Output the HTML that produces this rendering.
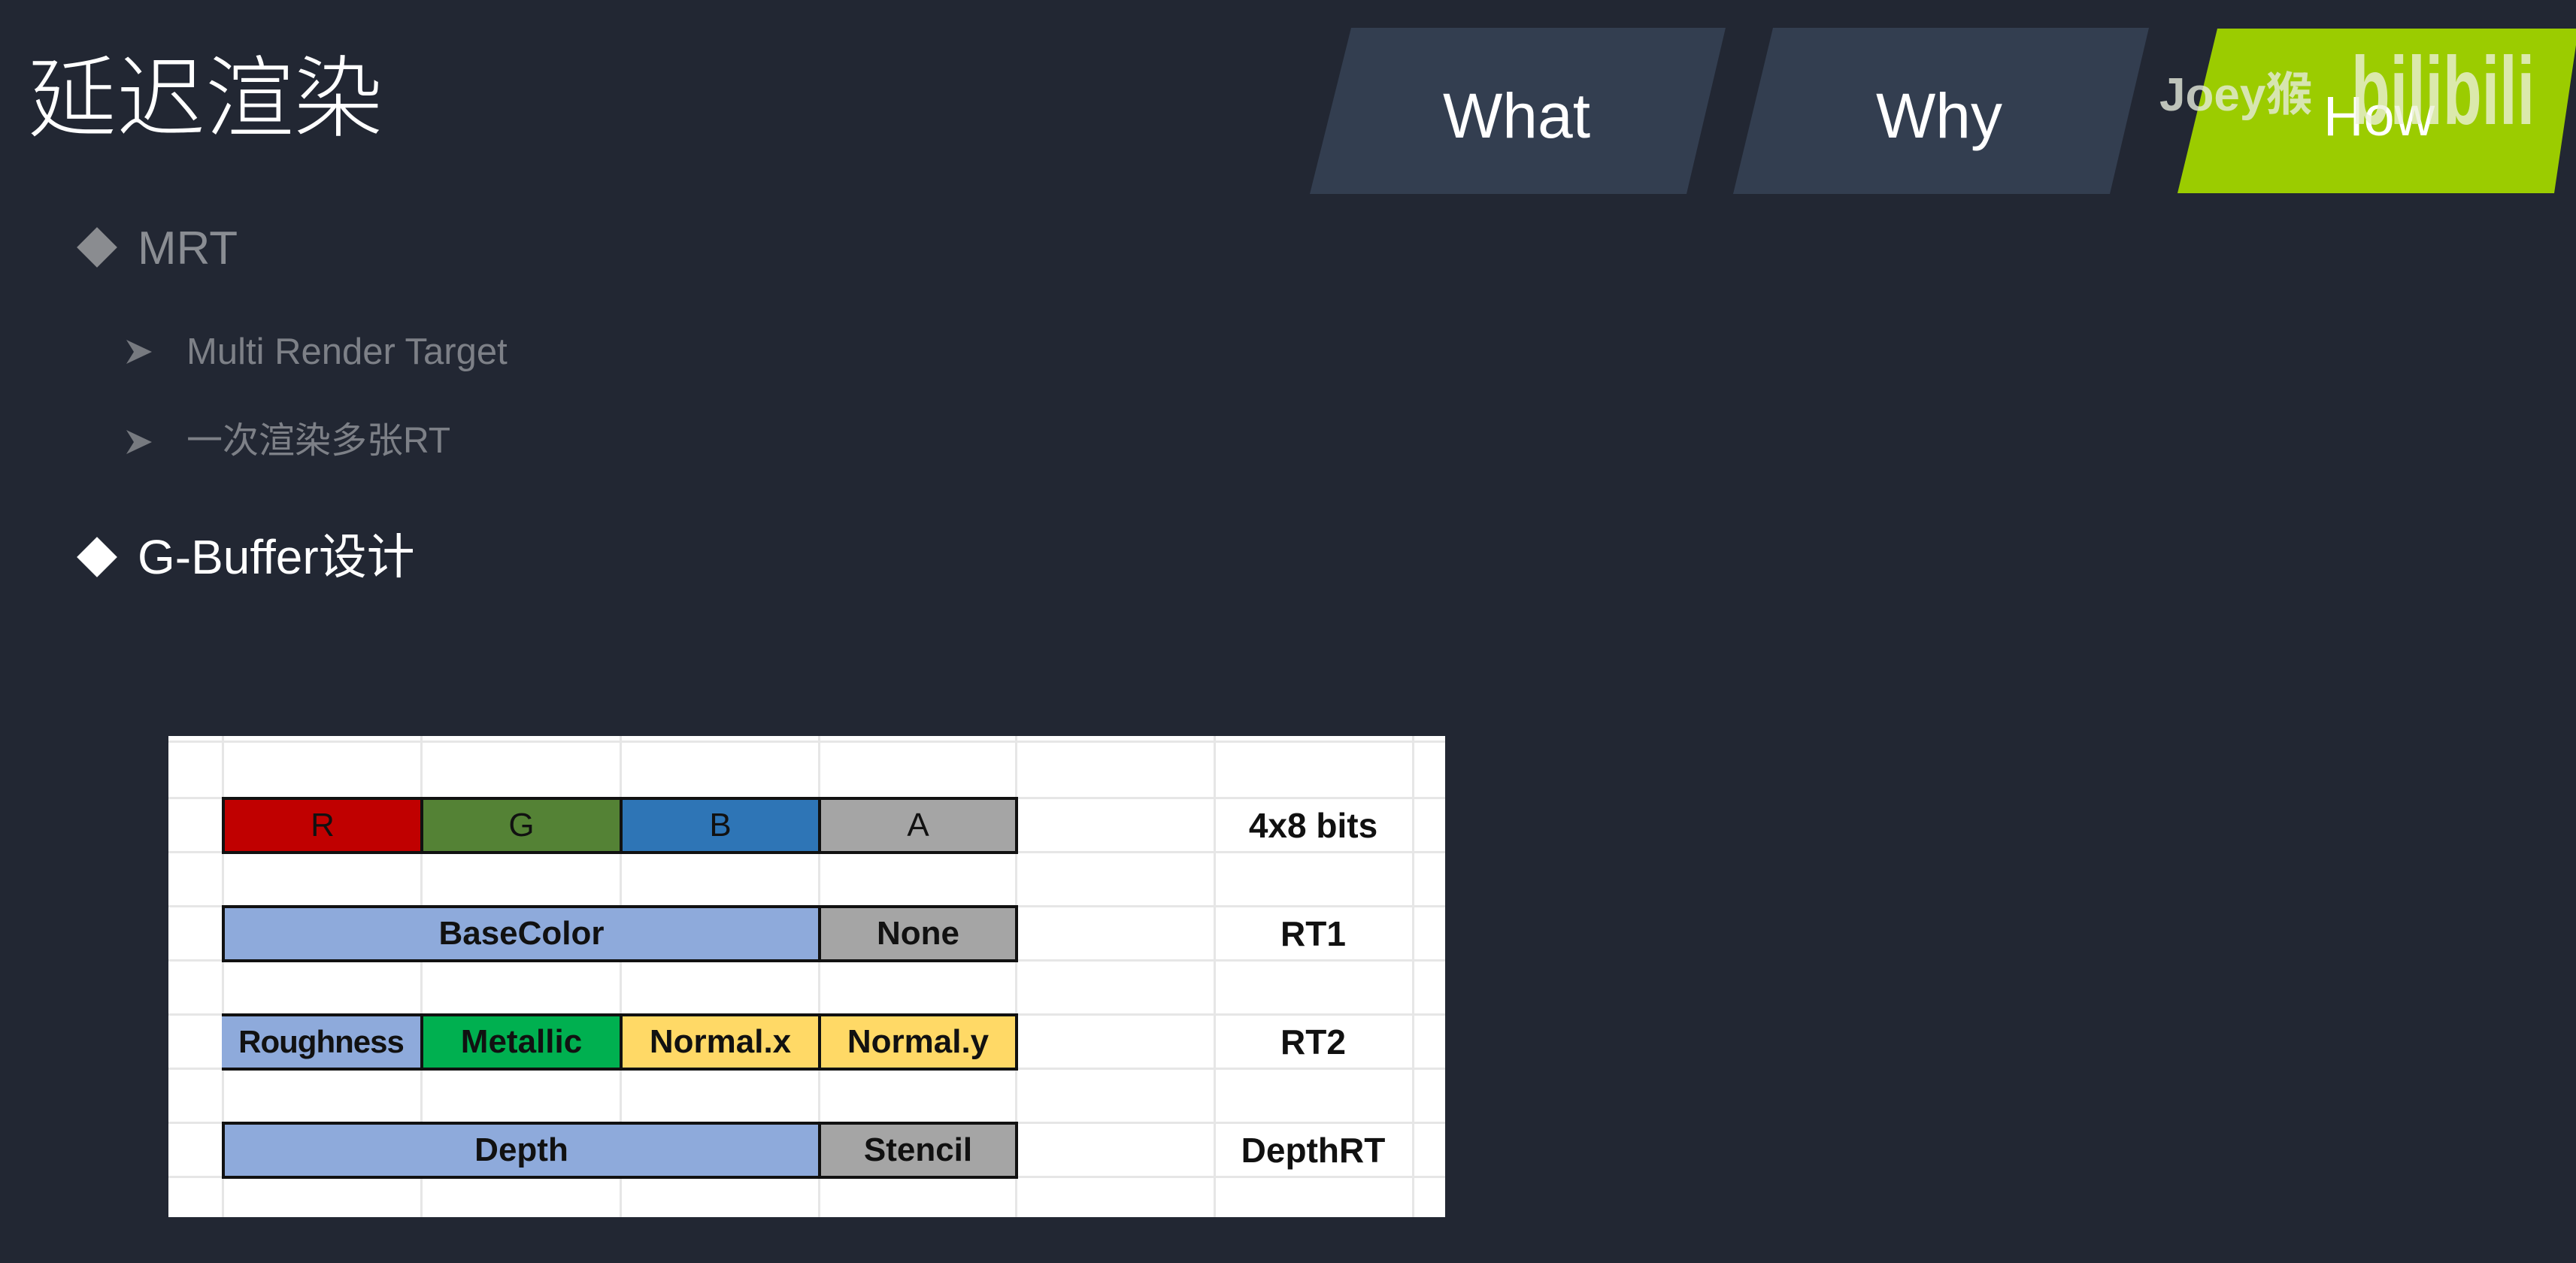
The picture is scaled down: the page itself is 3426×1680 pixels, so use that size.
<!DOCTYPE html>
<html><head><meta charset="utf-8"><style>
*{margin:0;padding:0;box-sizing:border-box}
html,body{width:3426px;height:1680px;overflow:hidden;background:#222733}
body{position:relative;font-family:"Liberation Sans","Noto Sans CJK SC",sans-serif}
.a{position:absolute;white-space:nowrap}
.dia{position:absolute;width:38px;height:38px;transform:rotate(45deg)}
.tbl{position:absolute;left:224px;top:979px;width:1698px;height:640px;background:#fff;overflow:hidden}
.vl{position:absolute;top:0;bottom:0;width:3px;background:#e6e6e6}
.hl{position:absolute;left:0;right:0;height:3px;background:#e6e6e6}
.c{position:absolute;display:flex;align-items:center;justify-content:center;font-weight:bold;font-size:44px;color:#111;border:4px solid #111;}
.lab{position:absolute;display:flex;align-items:center;justify-content:center;font-weight:bold;font-size:46px;color:#111;width:265px}
</style></head><body>
<div class="a" style="left:37px;top:50px;font-size:118px;color:#fff;font-family:'Noto Sans CJK SC',sans-serif;font-weight:300;line-height:1.2">延迟渲染</div>

<div class="dia" style="left:110px;top:310px;background:#8a8c90"></div>
<div class="a" style="left:183px;top:294px;font-size:62px;color:#8a8d93;line-height:1.2">MRT</div>
<svg class="a" style="left:168px;top:452px" width="34" height="32" viewBox="0 0 34 32"><path d="M0 0 L34 16 L0 32 L10 16 Z" fill="#777a80"/></svg>
<div class="a" style="left:248px;top:439px;font-size:49px;color:#7d8087;line-height:1.2">Multi Render Target</div>
<svg class="a" style="left:168px;top:572px" width="34" height="32" viewBox="0 0 34 32"><path d="M0 0 L34 16 L0 32 L10 16 Z" fill="#777a80"/></svg>
<div class="a" style="left:248px;top:558px;font-size:48px;color:#7d8087;line-height:1.2">一次渲染多张RT</div>
<div class="dia" style="left:110px;top:722px;background:#fff"></div>
<div class="a" style="left:183px;top:703px;font-size:64px;color:#fff;line-height:1.2">G-Buffer设计</div>

<svg class="a" style="left:0;top:0" width="3426" height="300">
<polygon points="1797,37 2295,37 2243,258 1742,258" fill="#333e50"/>
<polygon points="2358,37 2858,37 2806,258 2305,258" fill="#333e50"/>
<polygon points="2949,38 3426,38 3426,60 3397,257 2896,257" fill="#9bcc00"/>
</svg>
<div class="a" style="left:1919px;top:112px;font-size:84px;color:#fff;line-height:1">What</div>
<div class="a" style="left:2495px;top:112px;font-size:84px;color:#fff;line-height:1">Why</div>
<div class="a" style="left:3090px;top:118px;font-size:74px;color:#fff;line-height:1">How</div>
<div class="a" style="left:2872px;top:96px;font-size:62px;font-weight:bold;color:rgba(230,235,220,.8);line-height:1">Joey猴</div>
<div class="a" style="left:3127px;top:58px;font-size:128px;font-weight:bold;color:rgba(235,240,215,.8);line-height:1;transform:scaleX(.66);transform-origin:left">bilibili</div>

<div class="tbl">
<div class="hl" style="top:6px"></div>
<div class="hl" style="top:81px"></div><div class="hl" style="top:153px"></div>
<div class="hl" style="top:225px"></div><div class="hl" style="top:297px"></div>
<div class="hl" style="top:369px"></div><div class="hl" style="top:441px"></div>
<div class="hl" style="top:513px"></div><div class="hl" style="top:585px"></div>
<div class="vl" style="left:71px"></div><div class="vl" style="left:335px"></div>
<div class="vl" style="left:600px"></div><div class="vl" style="left:864px"></div>
<div class="vl" style="left:1126px"></div><div class="vl" style="left:1390px"></div>
<div class="vl" style="left:1654px"></div>

<div class="c" style="left:71px;top:81px;width:268px;height:76px;background:#c00000;font-weight:normal">R</div>
<div class="c" style="left:335px;top:81px;width:269px;height:76px;background:#548235;font-weight:normal">G</div>
<div class="c" style="left:600px;top:81px;width:268px;height:76px;background:#2e75b6;font-weight:normal">B</div>
<div class="c" style="left:864px;top:81px;width:266px;height:76px;background:#a5a5a5;font-weight:normal">A</div>
<div class="lab" style="left:1390px;top:81px;height:76px">4x8 bits</div>

<div class="c" style="left:71px;top:225px;width:797px;height:76px;background:#8eaadb">BaseColor</div>
<div class="c" style="left:864px;top:225px;width:266px;height:76px;background:#a5a5a5">None</div>
<div class="lab" style="left:1390px;top:225px;height:76px">RT1</div>

<div class="c" style="left:71px;top:369px;width:268px;height:76px;background:#8eaadb;font-size:42px;border-left:none;letter-spacing:-1px">Roughness</div>
<div class="c" style="left:335px;top:369px;width:269px;height:76px;background:#00b050">Metallic</div>
<div class="c" style="left:600px;top:369px;width:268px;height:76px;background:#ffd966">Normal.x</div>
<div class="c" style="left:864px;top:369px;width:266px;height:76px;background:#ffd966">Normal.y</div>
<div class="lab" style="left:1390px;top:369px;height:76px">RT2</div>

<div class="c" style="left:71px;top:513px;width:797px;height:76px;background:#8eaadb">Depth</div>
<div class="c" style="left:864px;top:513px;width:266px;height:76px;background:#a5a5a5">Stencil</div>
<div class="lab" style="left:1390px;top:513px;height:76px">DepthRT</div>
</div>
</body></html>
